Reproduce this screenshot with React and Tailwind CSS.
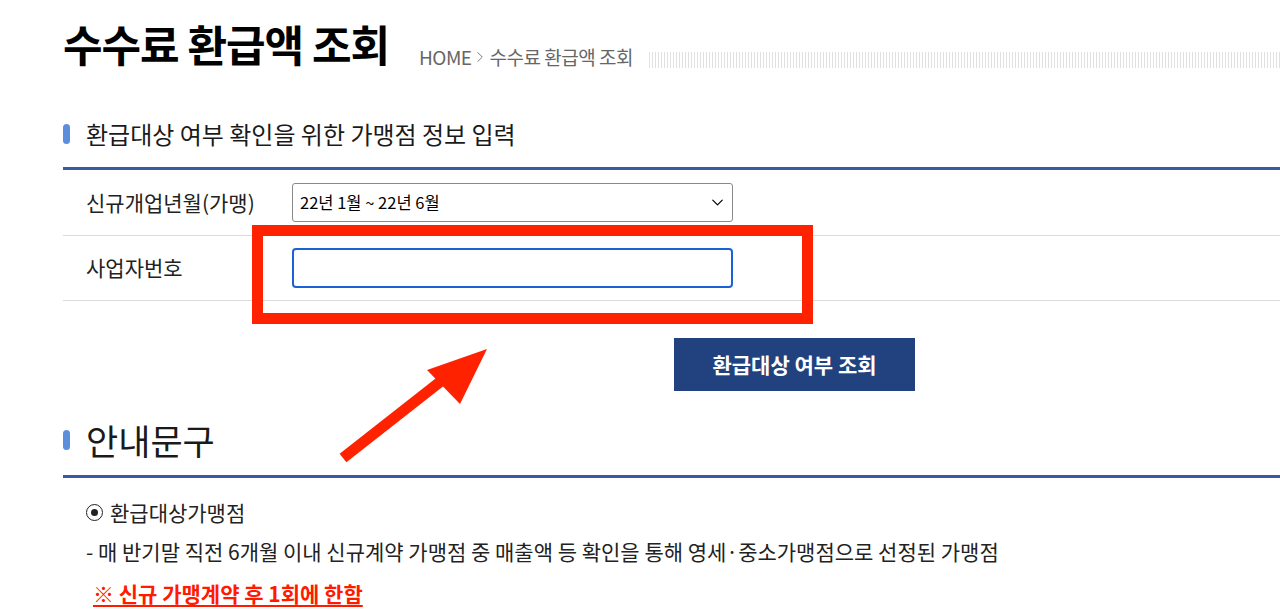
import { ChevronDown, ChevronRight } from 'lucide-react';

const font = { fontFamily: '"Noto Sans CJK KR", "Noto Sans", sans-serif' };

function SectionTitle({ children, size }) {
  return (
    <div className="flex items-center">
      <span className="w-[7px] h-[20px] rounded-full bg-[#5b8fdd]" />
      <h2 className={`ml-[16px] text-[#1a1a1a] ${size}`}>{children}</h2>
    </div>
  );
}

export default function App() {
  return (
    <div style={font} className="relative w-[1280px] h-[610px] overflow-hidden bg-white pl-[63px] text-[#222]">
      {/* page header */}
      <div className="flex items-end pt-[13px]">
        <h1 className="text-[43px] leading-[60px] font-bold tracking-[-1px] text-black">수수료 환급액 조회</h1>
        <div className="ml-[30px] mb-[4px] flex items-center text-[19px] leading-[24px] text-[#666] tracking-[-0.5px]">
          HOME
          <ChevronRight size={18} strokeWidth={1.25} className="text-[#777] mx-[-1px]" />
          <span className="ml-[2px]">수수료 환급액 조회</span>
        </div>
        <div className="flex-1 ml-[16px] mb-[5px] h-[16px] bg-[repeating-linear-gradient(90deg,#dfe1e3_0px,#dfe1e3_1px,transparent_1px,transparent_3px)]" />
      </div>

      {/* form section */}
      <div className="mt-[45px] leading-[32px]">
        <SectionTitle size="text-[24px]">환급대상 여부 확인을 위한 가맹점 정보 입력</SectionTitle>
      </div>
      <div className="mt-[17px] h-[3px] bg-[#3b5aa6]" />

      <div className="flex items-center h-[66px] border-b border-[#dcdcdc]">
        <div className="w-[229px] pl-[23px] text-[21px]">신규개업년월(가맹)</div>
        <div className="w-[441px] h-[39px] flex items-center justify-between border border-[#8a8a8a] rounded-[3px] pl-[7px] pr-[5px] text-[16.5px] text-black">
          <span>22년 1월 ~ 22년 6월</span>
          <ChevronDown size={19} strokeWidth={1.5} />
        </div>
      </div>
      <div className="flex items-center h-[65px] border-b border-[#dcdcdc]">
        <div className="w-[229px] pl-[23px] text-[21px]">사업자번호</div>
        <input className="w-[441px] h-[40px] border-2 border-[#1a62d6] rounded-[4px] outline-none" />
      </div>

      <button className="mt-[37px] ml-[611px] w-[241px] h-[53px] bg-[#21427f] text-white text-[21px] font-bold block">
        환급대상 여부 조회
      </button>

      {/* notice section */}
      <div className="mt-[29px] leading-[40px]">
        <SectionTitle size="text-[35px]">안내문구</SectionTitle>
      </div>
      <div className="mt-[15px] h-[3px] bg-[#3b5aa6]" />

      <div className="pl-[23px] text-[21px] leading-[30px]">
        <p className="mt-[19px] flex items-center">
          <span className="w-[17px] h-[17px] rounded-full border-[1.5px] border-[#222] flex items-center justify-center mr-[7px]">
            <span className="w-[7px] h-[7px] rounded-full bg-[#222]" />
          </span>
          환급대상가맹점
        </p>
        <p className="mt-[9px]">- 매 반기말 직전 6개월 이내 신규계약 가맹점 중 매출액 등 확인을 통해 영세·중소가맹점으로 선정된 가맹점</p>
        <p className="mt-[12px] pl-[7px] font-bold text-[#ff1a00] underline underline-offset-[3px]">※ 신규 가맹계약 후 1회에 한함</p>
      </div>

      {/* annotation overlay */}
      <div className="absolute left-[252px] top-[225px] w-[561px] h-[99px] border-[11px] border-[#ff2200]" />
      <svg className="absolute left-0 top-0" width="1280" height="610">
        <line x1="343" y1="458" x2="445" y2="378" stroke="#ff2200" strokeWidth="11" />
        <polygon points="487,349 460,404 427,370" fill="#ff2200" />
      </svg>
    </div>
  );
}
